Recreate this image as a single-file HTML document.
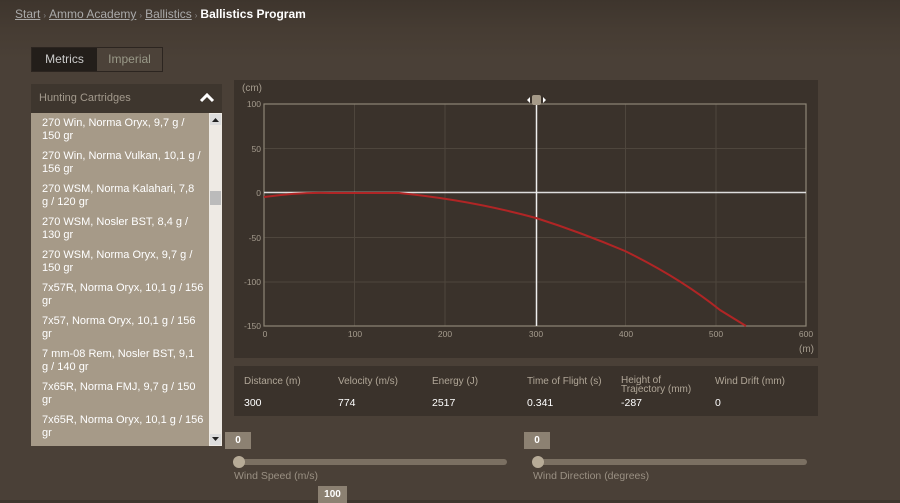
<!DOCTYPE html>
<html><head><meta charset="utf-8"><style>
*{margin:0;padding:0;box-sizing:border-box}
body{width:900px;height:500px;overflow:hidden;font-family:"Liberation Sans",sans-serif;background:linear-gradient(#3e352d 0,#463c33 30px,#4a4037 60px,#4a4037 100%);position:relative;color:#ddd}
.bc{position:absolute;left:15px;top:7px;font-size:12px;color:#aaa}
.bc a{color:#aaa;text-decoration:underline}
.bc b{color:#fff}
.bc s{text-decoration:none;font-size:8px;color:#888;margin:0 3px}
.tabs{position:absolute;left:31px;top:47px;width:132px;height:25px;display:flex;border:1px solid #2c2520}
.tabs div{flex:1;font-size:12px;line-height:23px;text-align:center}
.t1{background:#231e1a;color:#ccc}.t2{background:#4c4239;color:#998}
.hd{position:absolute;left:31px;top:84px;width:191px;height:29px;background:#3e362e;font-size:11px;color:#a39a8d;line-height:28px;padding-left:8px}
.list{position:absolute;left:31px;top:113px;width:191px;height:333px;background:#a69a88;overflow:hidden}
.it{height:33px;padding:4px 0 0 11px;font-size:11px;line-height:13px;color:#fff;white-space:nowrap}
.sb{position:absolute;left:209px;top:113px;width:13px;height:333px;background:#eeeae4}
.stats{position:absolute;left:234px;top:366px;width:584px;height:50px;background:#3a322b;font-size:10px;color:#b0a697}
.stats span{position:absolute}
.v{color:#fff;font-size:10.5px}
.bub{position:absolute;background:#8c8172;color:#fff;font-size:10px;font-weight:bold;text-align:center;line-height:17px;height:17px}
.track{position:absolute;height:6px;background:#7b7062;border-radius:3px}
.knob{position:absolute;width:12px;height:12px;border-radius:6px;background:#b7ab97}
.lab{position:absolute;font-size:10.5px;color:#9a9083}
</style></head><body>
<div class="bc"><a>Start</a><s>›</s><a>Ammo Academy</a><s>›</s><a>Ballistics</a><s>›</s><b>Ballistics Program</b></div>
<div class="tabs"><div class="t1">Metrics</div><div class="t2">Imperial</div></div>
<div class="hd">Hunting Cartridges<svg style="position:absolute;right:7px;top:9px" width="16" height="10"><path d="M2 8 L8 2 L14 8" stroke="#fff" stroke-width="3" fill="none"/></svg></div>
<div class="list">
<div class="it">270 Win, Norma Oryx, 9,7 g /<br>150 gr</div>
<div class="it">270 Win, Norma Vulkan, 10,1 g /<br>156 gr</div>
<div class="it">270 WSM, Norma Kalahari, 7,8<br>g / 120 gr</div>
<div class="it">270 WSM, Nosler BST, 8,4 g /<br>130 gr</div>
<div class="it">270 WSM, Norma Oryx, 9,7 g /<br>150 gr</div>
<div class="it">7x57R, Norma Oryx, 10,1 g / 156<br>gr</div>
<div class="it">7x57, Norma Oryx, 10,1 g / 156<br>gr</div>
<div class="it">7 mm-08 Rem, Nosler BST, 9,1<br>g / 140 gr</div>
<div class="it">7x65R, Norma FMJ, 9,7 g / 150<br>gr</div>
<div class="it">7x65R, Norma Oryx, 10,1 g / 156<br>gr</div>
</div>
<div class="sb"><svg width="13" height="333"><rect x="1" y="1" width="11" height="11" fill="#ddd"/><path d="M3 9 L6.5 5 L10 9Z" fill="#222"/><rect x="1" y="78" width="11" height="14" fill="#bbb"/><rect x="1" y="321" width="11" height="11" fill="#ddd"/><path d="M3 324 L6.5 328 L10 324Z" fill="#222"/></svg></div>
<svg style="position:absolute;left:0;top:0" width="900" height="370">
<rect x="234" y="80" width="584" height="278" fill="#3a322b"/>
<g stroke="#4e463d" stroke-width="1">
<line x1="354.5" y1="104" x2="354.5" y2="326"/><line x1="445" y1="104" x2="445" y2="326"/><line x1="625.5" y1="104" x2="625.5" y2="326"/><line x1="716" y1="104" x2="716" y2="326"/>
<line x1="264" y1="148.5" x2="806" y2="148.5"/><line x1="264" y1="237.5" x2="806" y2="237.5"/><line x1="264" y1="282" x2="806" y2="282"/>
</g>
<rect x="264" y="104" width="542" height="222" fill="none" stroke="#8e8576" stroke-width="1.2"/>
<line x1="264" y1="192.5" x2="806" y2="192.5" stroke="#ddd" stroke-width="1.5"/>
<line x1="536.5" y1="100" x2="536.5" y2="326" stroke="#eee" stroke-width="1.5"/>
<path d="M264 197 Q300 192 330 193 L399 193 Q470 200 536 218 Q580 232 625 251 Q680 278 720 310 L746 326" stroke="#b02525" stroke-width="2" fill="none"/>
<rect x="532" y="95" width="9" height="10" rx="2" fill="#a59a88"/><path d="M530 97 L527 100 L530 103Z M543 97 L546 100 L543 103Z" fill="#fff"/>
<g font-size="8.5" fill="#a59c8e" font-family="Liberation Sans">
<text x="242" y="91" font-size="10">(cm)</text>
<g text-anchor="end"><text x="261" y="107">100</text><text x="261" y="152">50</text><text x="261" y="196">0</text><text x="261" y="241">-50</text><text x="261" y="285">-100</text><text x="261" y="329">-150</text></g>
<g text-anchor="middle"><text x="265" y="337">0</text><text x="355" y="337">100</text><text x="445" y="337">200</text><text x="536" y="337">300</text><text x="626" y="337">400</text><text x="716" y="337">500</text><text x="806" y="337">600</text></g>
<text x="799" y="352" font-size="10">(m)</text>
</g></svg>
<div class="stats">
<span style="left:10px;top:10px">Distance&nbsp;(m)</span><span style="left:104px;top:10px">Velocity&nbsp;(m/s)</span><span style="left:198px;top:10px">Energy&nbsp;(J)</span><span style="left:293px;top:10px">Time of Flight&nbsp;(s)</span><span style="left:387px;top:10px;line-height:9px">Height of<br>Trajectory&nbsp;(mm)</span><span style="left:481px;top:10px">Wind Drift&nbsp;(mm)</span>
<span class="v" style="left:10px;top:31px">300</span><span class="v" style="left:104px;top:31px">774</span><span class="v" style="left:198px;top:31px">2517</span><span class="v" style="left:293px;top:31px">0.341</span><span class="v" style="left:387px;top:31px">-287</span><span class="v" style="left:481px;top:31px">0</span>
</div>
<div class="bub" style="left:225px;top:432px;width:26px">0</div>
<div class="bub" style="left:524px;top:432px;width:26px">0</div>
<div class="track" style="left:234px;top:459px;width:273px"></div><div class="knob" style="left:233px;top:456px"></div>
<div class="track" style="left:533px;top:459px;width:274px"></div><div class="knob" style="left:532px;top:456px"></div>
<div class="lab" style="left:234px;top:470px">Wind Speed (m/s)</div>
<div class="lab" style="left:533px;top:470px">Wind Direction (degrees)</div>
<div class="bub" style="left:318px;top:486px;width:29px">100</div>
</body></html>
